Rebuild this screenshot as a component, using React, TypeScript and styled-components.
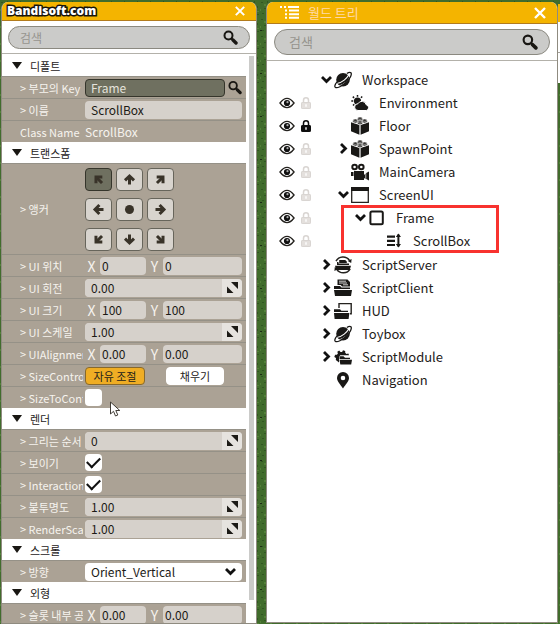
import React, { useId } from "react";
import styled, { createGlobalStyle, css } from "styled-components";

const GlobalStyle = createGlobalStyle`
  * { box-sizing: border-box; }
  body {
    margin: 0;
    background: #3f6b2b;
    font-family: "Noto Sans CJK KR", "Noto Sans", sans-serif;
    font-size: 13px;
    color: #24211a;
  }
  button, input, select { font: inherit; color: inherit; margin: 0; }
`;

/* ---------- page ---------- */

const Page = styled.div`
  position: relative;
  height: 100vh;
  overflow: hidden;
  display: grid;
  grid-template-columns: 256fr 301fr 2px;
  padding: 2px 0 0 1px;
`;

const Ground = styled.svg`
  position: absolute;
  inset: 0;
  width: 100%;
  height: 100%;
  z-index: -1;
`;

const Panel = styled.section<{ $fill?: boolean }>`
  min-width: 0;
  background: #fff;
  border: 1px solid #8f8b80;
  border-top: 0;
  border-radius: 7px 7px 0 0;
  margin: ${(p) => (p.$fill ? "0" : "0 0 1px 9px")};
  overflow: hidden;
  display: flex;
  flex-direction: column;
`;

const TitleBar = styled.header<{ $tall?: boolean }>`
  flex: none;
  height: ${(p) => (p.$tall ? 22 : 19)}px;
  background: #f4b400;
  border-bottom: 1px solid #b27b1d;
  display: flex;
  align-items: center;
  gap: 9px;
  padding: 0 11px 0 ${(p) => (p.$tall ? 13 : 5)}px;
  color: #ffd9a8;
`;

const Title = styled.h1`
  flex: 1;
  margin: 0;
  font-size: 13px;
  line-height: 18px;
  font-weight: 400;
`;

const Watermark = styled(Title)`
  font-family: "Open Sans", "Noto Sans", sans-serif;
  font-size: 12px;
  font-weight: 800;
  color: #fff;
  -webkit-text-stroke: 3px #17140c;
  paint-order: stroke fill;
`;

const CloseButton = styled.button`
  border: 0;
  padding: 0;
  background: none;
  display: flex;
`;

const SearchArea = styled.div<{ $tall?: boolean }>`
  flex: none;
  padding: ${(p) => (p.$tall ? "5px 7px" : "5px 6px 4px")};
  border-bottom: 1px solid #b3b1aa;
  font-size: ${(p) => (p.$tall ? 13 : 12)}px;
`;

const SearchPill = styled.label<{ $tall?: boolean }>`
  display: flex;
  align-items: center;
  height: ${(p) => (p.$tall ? 26 : 23)}px;
  padding: 0 11px 0 ${(p) => (p.$tall ? 14 : 11)}px;
  border: 1px solid #8b8980;
  border-radius: 13px;
  background: #cbcbc9;
`;

const SearchInput = styled.input`
  flex: 1;
  min-width: 0;
  border: 0;
  padding: 0;
  background: none;
  outline: none;
  line-height: 18px;
  &::placeholder { color: #96948e; opacity: 1; }
`;

/* ---------- properties ---------- */

const Scroller = styled.div`
  display: grid;
  grid-template-columns: minmax(0, 1fr) 5px;
  column-gap: 3px;
  padding: 1px 2px 0 0;
`;

const ScrollThumb = styled.div`
  height: 544px;
  margin-top: 1px;
  background: #cbcbc9;
`;

const SectionHeader = styled.h2`
  margin: 0;
  height: 21px;
  padding-left: 10px;
  display: flex;
  align-items: center;
  gap: 8px;
  font-size: 11px;
  line-height: 20px;
  font-weight: 400;
  background: #fff;
`;

const PropertyRow = styled.div<{ $tall?: boolean }>`
  display: grid;
  grid-template-columns: 63px minmax(0, 1fr);
  column-gap: 2px;
  align-items: center;
  height: ${(p) => (p.$tall ? 91 : 22)}px;
  padding: 0 4px 0 18px;
  background: #aba295;
  border-top: 1px solid #959187;
`;

const PropertyLabel = styled.label`
  overflow: hidden;
  white-space: nowrap;
  color: #f6f3ee;
  font-size: 11px;
  line-height: 18px;
`;

const PlainValue = styled.output`
  color: #f6f3ee;
  font-size: 12px;
  line-height: 18px;
`;

const fieldLook = css`
  height: 18px;
  min-width: 0;
  width: 100%;
  border: 0;
  border-radius: 4px;
  background: #d6d1cb;
  color: #1c1a16;
  font-size: 12px;
  line-height: 18px;
  outline: none;
`;

const TextField = styled.input<{ $dark?: boolean }>`
  ${fieldLook}
  padding: 0 6px;
  ${(p) => p.$dark && css`
    padding: 0 5px;
    background: #6f7060;
    color: #e4e2db;
    border: 1px solid #35352b;
  `}
`;

const PickRow = styled.div`
  display: grid;
  grid-template-columns: minmax(0, 1fr) 14px;
  column-gap: 3px;
  align-items: center;
`;

const IconButton = styled.button`
  border: 0;
  padding: 0;
  background: none;
  display: flex;
`;

const DragField = styled.div`
  display: grid;
  grid-template-columns: minmax(0, 1fr) 20px;
  border-radius: 4px;
  overflow: hidden;
  background: #d6d1cb;
`;

const DragHandle = styled.button`
  border: 0;
  padding: 0;
  background: #e6e3df;
  display: grid;
  place-items: center;
`;

const Pair = styled.div`
  display: grid;
  grid-template-columns: 13px 46px 13px minmax(0, 1fr);
  column-gap: 2px;
  align-items: center;
`;

const Axis = styled.label`
  color: #f6f3ee;
  font-size: 14px;
  line-height: 18px;
  text-align: center;
`;

const AxisField = styled.input`
  ${fieldLook}
  padding: 0 2px;
`;

const AnchorGrid = styled.div`
  display: grid;
  grid-template-columns: repeat(3, 27px);
  gap: 7px 4px;
`;

const AnchorButton = styled.button<{ $active: boolean }>`
  height: 23px;
  padding: 0;
  border: 1px solid ${(p) => (p.$active ? "#35352b" : "#67655b")};
  border-radius: 4px;
  background: ${(p) => (p.$active ? "#6f7060" : "#d8d4ce")};
  color: #393329;
  display: grid;
  place-items: center;
`;

const Choices = styled.div`
  display: grid;
  grid-template-columns: 60px 58px;
  column-gap: 21px;
`;

const ChoiceButton = styled.button<{ $active?: boolean }>`
  height: 18px;
  padding: 0;
  border: 1px solid ${(p) => (p.$active ? "#87682c" : "#fff")};
  border-radius: 4px;
  background: ${(p) => (p.$active ? "#efad24" : "#fff")};
  color: #24211a;
  font-size: 11px;
  line-height: 16px;
`;

const CheckBox = styled.input`
  appearance: none;
  width: 17px;
  height: 17px;
  border-radius: 4px;
  background: #fff;
  display: grid;
  place-items: center;
  &:checked::after {
    content: "";
    width: 11px;
    height: 6px;
    border: solid #111;
    border-width: 0 0 2px 2px;
    transform: translateY(-2px) rotate(-45deg);
  }
`;

const SelectBox = styled.div`
  display: grid;
  align-items: center;
  > * { grid-area: 1 / 1; }
  > svg { justify-self: end; margin-right: 6px; pointer-events: none; }
`;

const Select = styled.select`
  ${fieldLook}
  appearance: none;
  padding: 0 6px;
  background: #fff;
`;

/* ---------- world tree ---------- */

const Tree = styled.ul`
  list-style: none;
  margin: 0;
  padding: 7px 0 0;
  font-size: 13px;
`;

const Branch = styled.ul<{ $marked?: boolean }>`
  position: relative;
  list-style: none;
  margin: 0;
  padding: 0 0 ${(p) => (p.$marked ? 0 : 1)}px;
`;

const Highlight = styled.div`
  position: absolute;
  top: -1px;
  bottom: -1px;
  left: 74px;
  width: 158px;
  border: 3px solid #f8322f;
  pointer-events: none;
`;

const TreeRow = styled.div<{ $depth: number }>`
  height: 23px;
  display: grid;
  grid-template-columns: 16px 12px ${(p) => p.$depth * 17}px 7px 18px minmax(0, 1fr);
  grid-template-areas: "eye lock . chevron icon name";
  column-gap: 5px;
  align-items: center;
  padding-left: 12px;
  line-height: 22px;
  > :nth-child(1) { grid-area: eye; }
  > :nth-child(2) { grid-area: lock; justify-self: center; }
  > :nth-child(3) { grid-area: chevron; justify-self: end; margin-right: -3px; }
  > :nth-child(4) { grid-area: icon; justify-self: center; }
  > :nth-child(5) { grid-area: name; padding-left: 5px; white-space: nowrap; }
`;

const Neighbour = styled.div`
  margin-top: 2px;
  height: 79px;
  background: linear-gradient(#f4b400 0 18px, #fff 18px 48px, #a3a19a 48px 49px, #fff 49px);
`;

const Pointer = styled.svg`
  position: absolute;
  left: 109px;
  top: 401px;
`;

/* ---------- drawings ---------- */

const Magnifier = ({ size = 15 }: { size?: number }) => (
  <svg width={size} height={size} viewBox="0 0 15 15" fill="none" stroke="#191713">
    <circle cx="5.5" cy="5.5" r="4" strokeWidth="2" />
    <path d="M8.5 8.5 10 10" strokeWidth="2" />
    <path d="m10 10 3 3" strokeWidth="3.4" strokeLinecap="round" />
  </svg>
);

const Cross = ({ size = 12 }: { size?: number }) => (
  <svg width={size} height={size} viewBox="0 0 12 12" stroke="#fff" strokeWidth="2.4">
    <path d="M1 1l10 10M11 1 1 11" />
  </svg>
);

const Triangle = () => (
  <svg width="10" height="7" viewBox="0 0 10 7"><path d="M0 0h10L5 7z" fill="#191713" /></svg>
);

const ListLogo = () => (
  <svg width="19" height="13" viewBox="0 0 19 13" stroke="#fff" strokeWidth="2">
    <path d="M0 1h2M4 1h2M8 1h11M5 4.6h2M9 4.6h10M5 8.2h2M9 8.2h10M5 11.8h2M9 11.8h10" />
  </svg>
);

const DragGlyph = () => (
  <svg width="11" height="11" viewBox="0 0 11 11" fill="#1c1a16">
    <path d="M4 0h7v7zM0 4.500V11h6.500z" />
  </svg>
);

const Arrow = ({ angle }: { angle: number | null }) => (
  <svg width="13" height="13" viewBox="0 0 13 13">
    {angle === null ? (
      <circle cx="6.5" cy="6.5" r="4.5" fill="currentColor" />
    ) : (
      <g transform={`rotate(${angle} 6.5 6.5)`} fill="none" stroke="currentColor">
        <path d="M6.5 11.5V4" strokeWidth="3" />
        <path d="M2 7.400 6.500 3 11 7.400" strokeWidth="3" />
      </g>
    )}
  </svg>
);

const Chevron = ({ open }: { open?: boolean }) => (
  <svg width="11" height="11" viewBox="0 0 11 11" fill="none" stroke="#111" strokeWidth="2.8">
    <path d={open ? "M1 3l4.5 4.5L10 3" : "M3 1l4.5 4.5L3 10"} />
  </svg>
);

const Eye = () => (
  <svg width="16" height="12" viewBox="0 0 16 12">
    <path d="M1 6Q8-3.2 15 6 8 15.2 1 6z" fill="#fff" stroke="#25231f" strokeWidth="1.4" />
    <circle cx="8" cy="6" r="3.1" fill="#111" />
    <circle cx="8.5" cy="5.2" r="1.1" fill="#aaa" />
  </svg>
);

const Lock = ({ on }: { on?: boolean }) => (
  <svg width="10" height="12" viewBox="0 0 10 12" fill={on ? "#0d0d0d" : "#e4e0dd"} stroke={on ? "#0d0d0d" : "#d9d5d2"}>
    <path d="M2.5 6V3.3a2.5 2.5 0 0 1 5 0V6" fill="none" strokeWidth="1.5" />
    <rect x=".5" y="5.5" width="9" height="6" rx=".6" />
    <path d="M5 7.2v2.6" stroke="#fff" strokeWidth="1.4" />
  </svg>
);

type IconName =
  | "planet" | "weather" | "block" | "camera" | "window" | "frame" | "scroll"
  | "server" | "client" | "hud" | "module" | "pin";

const folder = "M0 7h6l1.5 1.6H16V10H0zM0 11h18l-1 6H1z";

const shapes: Record<IconName, React.ReactNode> = {
  planet: (
    <>
      <circle cx="9" cy="8.8" r="6.8" />
      <path d="M3.600 12.200C8 11.500 13 7.500 15 3.600" fill="none" stroke="#fff" strokeWidth="1.100" />
      <path d="M5.400 14.800C10 13.200 14 10 15.700 6.800" fill="none" stroke="#fff" strokeWidth=".8" />
      <path d="M3 10.800C1 13.200.4 15.400 1.300 16.300c1.700 1.400 6.900-1.300 10.900-5S18.200 3.200 16.900 1.800C16.100 1 14.400 1.500 12.800 2.500" fill="none" stroke="#191816" strokeWidth="1.300" />
    </>
  ),
  weather: (
    <>
      <circle cx="6.5" cy="7" r="3.6" />
      <path d="M6.5 1v1.7M1.8 2.6l1.3 1.3M.3 7h1.9M2 11.5l1.2-1.2M11.2 2.5 10 3.8" stroke="#191816" strokeWidth="1.5" />
      <path d="M7 16.5a3.4 3.4 0 0 1 0-6.8 4.4 4.4 0 0 1 8.2 1.1 2.900 2.900 0 0 1 .1 5.700z" stroke="#fff" strokeWidth="1" />
    </>
  ),
  block: (
    <>
      <path d="M0 5.2 8.4 8v9.7L0 14.2zM9.600 8 18 5.200v9l-8.400 3.500zM1 4.100 9 1.400l8 2.700-8 2.800z" />
      <g stroke="#fff" strokeWidth=".6">
        <path d="M6.6 1.2v1.6c0 1.500 4.800 1.500 4.800 0V1.200zM2 3.300v1.500c0 1.500 4.600 1.500 4.600 0V3.300zM11.400 3.300v1.500c0 1.500 4.600 1.500 4.600 0V3.300zM6.600 5v1.600c0 1.500 4.800 1.500 4.800 0V5z" />
        <ellipse cx="9" cy="1.2" rx="2.4" ry="1.1" />
        <ellipse cx="4.3" cy="3.2" rx="2.3" ry="1.1" />
        <ellipse cx="13.7" cy="3.2" rx="2.3" ry="1.1" />
        <ellipse cx="9" cy="5" rx="2.4" ry="1.1" />
      </g>
    </>
  ),
  camera: (
    <>
      <circle cx="3.6" cy="4" r="2.3" fill="none" stroke="#191816" strokeWidth="2" />
      <circle cx="10.3" cy="4" r="2.3" fill="none" stroke="#191816" strokeWidth="2" />
      <path d="M3 8h10v9H3zM0 9h2.5v4H0zM13 12l1.5-1.4V16L13 15zM15.200 10l2.800-1.500v9L15.200 16z" />
    </>
  ),
  window: (
    <>
      <path d="M.7 1.7h16.6v14.6H.7z" fill="none" stroke="#24221f" strokeWidth="1.3" />
      <path d="M0 1h18v4H0z" />
    </>
  ),
  frame: <rect x="2.4" y="2.4" width="12.4" height="12.8" rx="1.5" fill="none" stroke="#191816" strokeWidth="2" />,
  scroll: (
    <>
      <path d="M2 4.600h8M2 8.800h8M2 13h8" stroke="#191816" strokeWidth="2.200" />
      <path d="M13.400 2.500v12" stroke="#191816" strokeWidth="2" />
      <path d="m10.800 5 2.600-3.500L16 5zM10.800 12l2.600 3.500L16 12z" />
    </>
  ),
  server: (
    <>
      <path d="M2 5.2a8 8 0 0 1 13.5-.8M16.200 12.800a8 8 0 0 1-13.500.6" fill="none" stroke="#24221f" strokeWidth="1.5" />
      <path d="m17.600 3-.4 4-3.400-2zM.4 15l.4-4 3.400 2z" />
      <path d="M5.200 4h6l1.600 1.400V7H5.200zM3 6h1.500v1.600H15V9H3zM1 9.800h16L15.700 14H2.300z" />
    </>
  ),
  client: (
    <>
      <path d={folder} />
      <path d="M3.500 .5h10L16 3v4.600H8L6.700 6H3.500z" />
      <path d="M5 2.200h7M5 4h8M9 5.800h5" stroke="#fff" strokeWidth=".8" />
    </>
  ),
  hud: (
    <>
      <path d="M5 6V1.600h12.200v10.200H16" fill="none" stroke="#24221f" strokeWidth="1.400" />
      <path d="M0 7.200h6l1.400 1.500H14V10H0zM0 11h15.400l-.8 6H.6z" />
    </>
  ),
  module: (
    <>
      <path d="M5 14.500 1.800 12 2 10 .3 9l.8-2.200 1.800-.1 1-1.200-.6-1.800L5.200 2.600l1.300 1.300h1.600L9 2.200l2.200.7v1.800L12.500 6l1.800-.5.8 1.800H6.200L5 9z" />
      <path d="M5.500 8.300h4L11 9.700h5V11H5.500zM5.500 11.800H18l-.8 4.700H6.300z" />
    </>
  ),
  pin: <path d="M9 1a6 6 0 0 0-6 6c0 3.700 3.500 6.400 6 10.500C11.500 13.400 15 10.700 15 7a6 6 0 0 0-6-6zm0 3.700a2.300 2.300 0 1 1 0 4.600 2.300 2.300 0 0 1 0-4.600z" fillRule="evenodd" />,
};

const NodeIcon = ({ name }: { name: IconName }) => (
  <svg width="18" height="18" viewBox="0 0 18 18" fill="#191816">{shapes[name]}</svg>
);

const Grass = () => (
  <Ground aria-hidden="true">
    <defs>
      <pattern id="grass" width="13" height="17" patternUnits="userSpaceOnUse">
        <rect width="13" height="17" fill="#416c2c" />
        <path d="M1 2h2v1H1zM7 1h1v2H7zM4 8h3v1H4zM10 6h1v2h-1zM2 13h2v1H2zM9 14h3v1H9z" fill="#315622" />
        <path d="M4 4h2v2H4zM10 11h2v1h-2zM0 9h1v2H0zM6 12h2v1H6z" fill="#538039" />
      </pattern>
      <pattern id="soil" width="31" height="43" patternUnits="userSpaceOnUse">
        <path d="M4 6h2v1H4zM22 17h1v2h-1zM12 30h2v1h-2zM27 38h1v1h-1z" fill="#1c2b15" />
      </pattern>
    </defs>
    <rect width="100%" height="100%" fill="url(#grass)" />
    <rect width="100%" height="100%" fill="url(#soil)" />
  </Ground>
);

/* ---------- composed parts ---------- */

const Search = ({ tall }: { tall?: boolean }) => (
  <SearchArea $tall={tall}>
    <SearchPill $tall={tall}>
      <SearchInput type="search" placeholder="검색" aria-label="검색" />
      <Magnifier size={tall ? 16 : 15} />
    </SearchPill>
  </SearchArea>
);

const Section = ({ title, children }: { title: string; children: React.ReactNode }) => (
  <section>
    <SectionHeader><Triangle />{title}</SectionHeader>
    {children}
  </section>
);

const Property = ({ label, tall, children }: { label: string; tall?: boolean; children: (id: string) => React.ReactNode }) => {
  const id = useId();
  return (
    <PropertyRow $tall={tall}>
      <PropertyLabel htmlFor={id}>{label}</PropertyLabel>
      {children(id)}
    </PropertyRow>
  );
};

const DragProperty = ({ label, value }: { label: string; value: string }) => (
  <Property label={label}>
    {(id) => (
      <DragField>
        <TextField id={id} defaultValue={value} />
        <DragHandle type="button" aria-label={`${label} 조절`}><DragGlyph /></DragHandle>
      </DragField>
    )}
  </Property>
);

const PairProperty = ({ label, value }: { label: string; value: string }) => (
  <Property label={label}>
    {(id) => (
      <Pair>
        <Axis htmlFor={id}>X</Axis>
        <AxisField id={id} defaultValue={value} />
        <Axis htmlFor={`${id}y`}>Y</Axis>
        <AxisField id={`${id}y`} defaultValue={value} />
      </Pair>
    )}
  </Property>
);

const CheckProperty = ({ label, checked }: { label: string; checked?: boolean }) => (
  <Property label={label}>
    {(id) => <CheckBox type="checkbox" id={id} defaultChecked={checked} />}
  </Property>
);

const anchors: (number | null)[] = [-45, 0, 45, -90, null, 90, -135, 180, 135];

type TreeNode = {
  name: string;
  icon: IconName;
  open?: boolean;
  folded?: boolean;
  lock?: "on" | "off";
  marked?: boolean;
  children?: TreeNode[];
};

const world: TreeNode[] = [
  {
    name: "Workspace", icon: "planet", open: true,
    children: [
      { name: "Environment", icon: "weather", lock: "off" },
      { name: "Floor", icon: "block", lock: "on" },
      { name: "SpawnPoint", icon: "block", lock: "off", folded: true },
      { name: "MainCamera", icon: "camera", lock: "off" },
      {
        name: "ScreenUI", icon: "window", lock: "off", open: true, marked: true,
        children: [
          { name: "Frame", icon: "frame", lock: "off", open: true, children: [{ name: "ScrollBox", icon: "scroll", lock: "off" }] },
        ],
      },
    ],
  },
  { name: "ScriptServer", icon: "server", folded: true },
  { name: "ScriptClient", icon: "client", folded: true },
  { name: "HUD", icon: "hud", folded: true },
  { name: "Toybox", icon: "planet", folded: true },
  { name: "ScriptModule", icon: "module", folded: true },
  { name: "Navigation", icon: "pin" },
];

const Node = ({ node, depth = 0 }: { node: TreeNode; depth?: number }) => (
  <li>
    <TreeRow $depth={depth}>
      {node.lock ? <IconButton aria-label={`${node.name} 보이기`}><Eye /></IconButton> : <span />}
      {node.lock ? <IconButton aria-label={`${node.name} 잠금`}><Lock on={node.lock === "on"} /></IconButton> : <span />}
      {node.open || node.folded ? <IconButton aria-label={`${node.name} 펼치기`}><Chevron open={node.open} /></IconButton> : <span />}
      <NodeIcon name={node.icon} />
      <span>{node.name}</span>
    </TreeRow>
    {node.children && (
      <Branch $marked={depth > 0}>
        {node.children.map((child) => <Node key={child.name} node={child} depth={depth + 1} />)}
        {node.marked && <Highlight />}
      </Branch>
    )}
  </li>
);

export default function App() {
  return (
    <>
      <GlobalStyle />
      <Page>
        <Grass />
        <Panel $fill>
          <TitleBar>
            <Watermark>Bandisoft.com</Watermark>
            <CloseButton aria-label="닫기"><Cross size={10} /></CloseButton>
          </TitleBar>
          <Search />
          <Scroller>
            <div>
              <Section title="디폴트">
                <Property label="> 부모의 Key">
                  {(id) => (
                    <PickRow>
                      <TextField id={id} $dark defaultValue="Frame" />
                      <IconButton aria-label="찾기"><Magnifier /></IconButton>
                    </PickRow>
                  )}
                </Property>
                <Property label="> 이름">{(id) => <TextField id={id} defaultValue="ScrollBox" />}</Property>
                <Property label="Class Name">{(id) => <PlainValue id={id}>ScrollBox</PlainValue>}</Property>
              </Section>
              <Section title="트랜스폼">
                <Property label="> 앵커" tall>
                  {(id) => (
                    <AnchorGrid>
                      {anchors.map((angle, i) => (
                        <AnchorButton key={i} id={i === 0 ? id : undefined} $active={i === 0} aria-label={`앵커 ${i + 1}`}>
                          <Arrow angle={angle} />
                        </AnchorButton>
                      ))}
                    </AnchorGrid>
                  )}
                </Property>
                <PairProperty label="> UI 위치" value="0" />
                <DragProperty label="> UI 회전" value="0.00" />
                <PairProperty label="> UI 크기" value="100" />
                <DragProperty label="> UI 스케일" value="1.00" />
                <PairProperty label="> UIAlignment" value="0.00" />
                <Property label="> SizeControl">
                  {(id) => (
                    <Choices>
                      <ChoiceButton id={id} $active>자유 조절</ChoiceButton>
                      <ChoiceButton>채우기</ChoiceButton>
                    </Choices>
                  )}
                </Property>
                <CheckProperty label="> SizeToContent" />
              </Section>
              <Section title="렌더">
                <DragProperty label="> 그리는 순서" value="0" />
                <CheckProperty label="> 보이기" checked />
                <CheckProperty label="> Interaction" checked />
                <DragProperty label="> 불투명도" value="1.00" />
                <DragProperty label="> RenderScale" value="1.00" />
              </Section>
              <Section title="스크롤">
                <Property label="> 방향">
                  {(id) => (
                    <SelectBox>
                      <Select id={id}><option>Orient_Vertical</option></Select>
                      <Chevron open />
                    </SelectBox>
                  )}
                </Property>
              </Section>
              <Section title="외형">
                <PairProperty label="> 슬롯 내부 공간" value="0.00" />
              </Section>
            </div>
            <ScrollThumb />
          </Scroller>
        </Panel>
        <Panel>
          <TitleBar $tall>
            <ListLogo />
            <Title>월드 트리</Title>
            <CloseButton aria-label="닫기"><Cross /></CloseButton>
          </TitleBar>
          <Search tall />
          <Tree>
            {world.map((node) => <Node key={node.name} node={node} />)}
          </Tree>
        </Panel>
        <Neighbour />
        <Pointer width="12" height="17" viewBox="0 0 12 17">
          <path d="M1.500 1v12l3-2.700 2 4.700 2.300-1-2-4.500h4z" fill="#fff" stroke="#403c35" />
        </Pointer>
      </Page>
    </>
  );
}
